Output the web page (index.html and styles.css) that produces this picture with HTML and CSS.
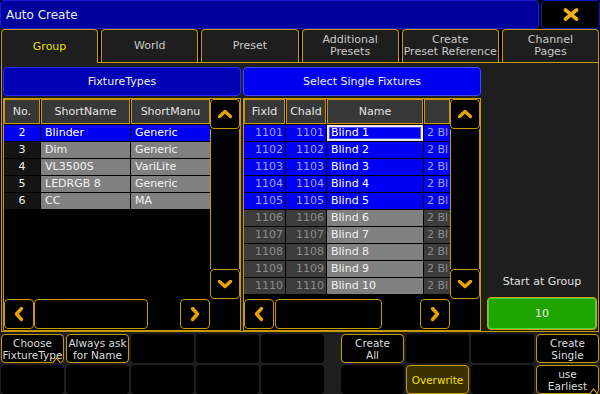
FILE: index.html
```html
<!DOCTYPE html>
<html lang="en">
<head>
    <meta charset="UTF-8">
    <title>Auto Create</title>
    <link rel="stylesheet" href="styles.css">
</head>
<body>
<div class="screen">

    <!-- Title bar -->
    <div class="titlebar">
        <div class="title">Auto Create</div>
        <div class="close">
            <svg width="16" height="13" viewBox="0 0 16 13"><path d="M2.5 2 L13.5 11 M13.5 2 L2.5 11" stroke="#f0b018" stroke-width="3.6" stroke-linecap="round" fill="none"/></svg>
        </div>
    </div>

    <!-- Tabs -->
    <div class="tabs">
        <div class="tab active">Group</div>
        <div class="tab">World</div>
        <div class="tab">Preset</div>
        <div class="tab">Additional<br>Presets</div>
        <div class="tab">Create<br>Preset Reference</div>
        <div class="tab">Channel<br>Pages</div>
    </div>

    <div class="content">

        <!-- Fixture types -->
        <div class="panel left">
            <div class="panel-head">FixtureTypes</div>
            <div class="list">
                <div class="list-main">
                    <div class="grid">
                        <div class="row head-row">
                            <div class="hcell">No.</div>
                            <div class="hcell">ShortName</div>
                            <div class="hcell">ShortManu</div>
                        </div>
                        <div class="row sel">
                            <div class="cell num">2</div>
                            <div class="cell">Blinder</div>
                            <div class="cell">Generic</div>
                        </div>
                        <div class="row">
                            <div class="cell num">3</div>
                            <div class="cell">Dim</div>
                            <div class="cell">Generic</div>
                        </div>
                        <div class="row">
                            <div class="cell num">4</div>
                            <div class="cell">VL3500S</div>
                            <div class="cell">VariLite</div>
                        </div>
                        <div class="row">
                            <div class="cell num">5</div>
                            <div class="cell">LEDRGB 8</div>
                            <div class="cell">Generic</div>
                        </div>
                        <div class="row">
                            <div class="cell num">6</div>
                            <div class="cell">CC</div>
                            <div class="cell">MA</div>
                        </div>
                    </div>
                    <div class="vscroll">
                        <div class="sbtn"><svg width="16" height="10" viewBox="0 0 16 10"><path d="M2.5 7.5 L8 2.5 L13.5 7.5" stroke="#e8a400" stroke-width="3.4" stroke-linecap="round" stroke-linejoin="round" fill="none"/></svg></div>
                        <div class="track"></div>
                        <div class="sbtn"><svg width="16" height="10" viewBox="0 0 16 10"><path d="M2.5 2.5 L8 7.5 L13.5 2.5" stroke="#e8a400" stroke-width="3.4" stroke-linecap="round" stroke-linejoin="round" fill="none"/></svg></div>
                    </div>
                </div>
                <div class="hscroll">
                    <div class="sbtn"><svg width="10" height="16" viewBox="0 0 10 16"><path d="M7.5 2.5 L2.5 8 L7.5 13.5" stroke="#e8a400" stroke-width="3.4" stroke-linecap="round" stroke-linejoin="round" fill="none"/></svg></div>
                    <div class="thumb"></div>
                    <div class="spacer"></div>
                    <div class="sbtn"><svg width="10" height="16" viewBox="0 0 10 16"><path d="M2.5 2.5 L7.5 8 L2.5 13.5" stroke="#e8a400" stroke-width="3.4" stroke-linecap="round" stroke-linejoin="round" fill="none"/></svg></div>
                    <div class="corner"></div>
                </div>
            </div>
        </div>

        <!-- Single fixtures -->
        <div class="panel right focus">
            <div class="panel-head">Select Single Fixtures</div>
            <div class="list">
                <div class="list-main">
                    <div class="grid">
                        <div class="row head-row">
                            <div class="hcell">FixId</div>
                            <div class="hcell">ChaId</div>
                            <div class="hcell">Name</div>
                            <div class="hcell"></div>
                        </div>
                        <div class="row sel">
                            <div class="cell id">1101</div>
                            <div class="cell id">1101</div>
                            <div class="cell name editing">Blind 1</div>
                            <div class="cell id-left">2 Bl</div>
                        </div>
                        <div class="row sel">
                            <div class="cell id">1102</div>
                            <div class="cell id">1102</div>
                            <div class="cell name">Blind 2</div>
                            <div class="cell id-left">2 Bl</div>
                        </div>
                        <div class="row sel">
                            <div class="cell id">1103</div>
                            <div class="cell id">1103</div>
                            <div class="cell name">Blind 3</div>
                            <div class="cell id-left">2 Bl</div>
                        </div>
                        <div class="row sel">
                            <div class="cell id">1104</div>
                            <div class="cell id">1104</div>
                            <div class="cell name">Blind 4</div>
                            <div class="cell id-left">2 Bl</div>
                        </div>
                        <div class="row sel">
                            <div class="cell id">1105</div>
                            <div class="cell id">1105</div>
                            <div class="cell name">Blind 5</div>
                            <div class="cell id-left">2 Bl</div>
                        </div>
                        <div class="row">
                            <div class="cell id">1106</div>
                            <div class="cell id">1106</div>
                            <div class="cell name">Blind 6</div>
                            <div class="cell id-left">2 Bl</div>
                        </div>
                        <div class="row">
                            <div class="cell id">1107</div>
                            <div class="cell id">1107</div>
                            <div class="cell name">Blind 7</div>
                            <div class="cell id-left">2 Bl</div>
                        </div>
                        <div class="row">
                            <div class="cell id">1108</div>
                            <div class="cell id">1108</div>
                            <div class="cell name">Blind 8</div>
                            <div class="cell id-left">2 Bl</div>
                        </div>
                        <div class="row">
                            <div class="cell id">1109</div>
                            <div class="cell id">1109</div>
                            <div class="cell name">Blind 9</div>
                            <div class="cell id-left">2 Bl</div>
                        </div>
                        <div class="row">
                            <div class="cell id">1110</div>
                            <div class="cell id">1110</div>
                            <div class="cell name">Blind 10</div>
                            <div class="cell id-left">2 Bl</div>
                        </div>
                    </div>
                    <div class="vscroll">
                        <div class="sbtn"><svg width="16" height="10" viewBox="0 0 16 10"><path d="M2.5 7.5 L8 2.5 L13.5 7.5" stroke="#e8a400" stroke-width="3.4" stroke-linecap="round" stroke-linejoin="round" fill="none"/></svg></div>
                        <div class="track"></div>
                        <div class="sbtn"><svg width="16" height="10" viewBox="0 0 16 10"><path d="M2.5 2.5 L8 7.5 L13.5 2.5" stroke="#e8a400" stroke-width="3.4" stroke-linecap="round" stroke-linejoin="round" fill="none"/></svg></div>
                    </div>
                </div>
                <div class="hscroll">
                    <div class="sbtn"><svg width="10" height="16" viewBox="0 0 10 16"><path d="M7.5 2.5 L2.5 8 L7.5 13.5" stroke="#e8a400" stroke-width="3.4" stroke-linecap="round" stroke-linejoin="round" fill="none"/></svg></div>
                    <div class="thumb narrow"></div>
                    <div class="spacer"></div>
                    <div class="sbtn"><svg width="10" height="16" viewBox="0 0 10 16"><path d="M2.5 2.5 L7.5 8 L2.5 13.5" stroke="#e8a400" stroke-width="3.4" stroke-linecap="round" stroke-linejoin="round" fill="none"/></svg></div>
                    <div class="corner"></div>
                </div>
            </div>
        </div>

        <!-- Start group -->
        <div class="side">
            <div class="side-label">Start at Group</div>
            <div class="green-btn">10</div>
        </div>
    </div>

    <!-- Bottom keys -->
    <div class="keys">
        <div class="key-group five">
            <div class="key btn">Choose<br>FixtureType
                <svg class="notch" width="9" height="6" viewBox="0 0 9 6"><path d="M0.5 6 L4.5 1 L8.5 6" stroke="#d4a000" stroke-width="1.2" fill="#000"/></svg>
            </div>
            <div class="key btn">Always ask<br>for Name</div>
            <div class="key"></div>
            <div class="key"></div>
            <div class="key"></div>
            <div class="key"></div>
            <div class="key"></div>
            <div class="key"></div>
            <div class="key"></div>
            <div class="key"></div>
        </div>
        <div class="key-group four">
            <div class="key btn">Create<br>All</div>
            <div class="key"></div>
            <div class="key"></div>
            <div class="key btn">Create<br>Single</div>
            <div class="key"></div>
            <div class="key btn on">Overwrite</div>
            <div class="key"></div>
            <div class="key btn">use<br>Earliest
                <svg class="notch end" width="9" height="6" viewBox="0 0 9 6"><path d="M0.5 6 L4.5 1 L8.5 6" stroke="#d4a000" stroke-width="1.2" fill="#000"/></svg>
            </div>
        </div>
    </div>
</div>
</body>
</html>
```

FILE: styles.css
```css
/* General */
* {
    box-sizing: border-box;
}

body {
    margin: 0;
    background-color: #000;
    font-family: "DejaVu Sans", sans-serif;
    font-size: 11px;
    color: #ddd;
}

.screen {
    width: 600px;
    height: 394px;
    overflow: hidden;
    display: flex;
    flex-direction: column;
}

/* Title bar */
.titlebar {
    display: flex;
    gap: 2px;
    height: 29px;
    flex-shrink: 0;
}

.title {
    flex: 1;
    background-color: #00009c;
    border: 1px solid #1c1cd8;
    border-radius: 4px;
    color: #f0f0f0;
    font-size: 12px;
    padding-left: 5px;
    display: flex;
    align-items: center;
}

.close {
    width: 59px;
    background-color: #000;
    border: 1px solid #1414c8;
    border-radius: 4px;
    display: flex;
    align-items: center;
    justify-content: center;
}

/* Tabs */
.tabs {
    display: flex;
    gap: 3px;
    height: 33px;
    padding: 0 1px;
    flex-shrink: 0;
}

.tab {
    flex: 1;
    background-color: #1e1e1e;
    border: 1px solid #c89a00;
    border-bottom: none;
    border-radius: 4px 4px 0 0;
    color: #c8c8c8;
    display: flex;
    align-items: center;
    justify-content: center;
    text-align: center;
    line-height: 12px;
    white-space: nowrap;
}

.tab.active {
    color: #f4ee00;
    text-shadow: 0 0 1px #000, 0 0 1px #000;
    position: relative;
    z-index: 1;
    height: 34px;
    padding-top: 1px;
}

/* Main area */
.content {
    height: 270px;
    flex-shrink: 0;
    margin: 0 1px;
    border: 1px solid #c89a00;
    background-color: #1e1e1e;
    display: flex;
    gap: 2px;
    padding: 4px 1px 0 1px;
}

.panel {
    width: 238px;
    display: flex;
    flex-direction: column;
}

.panel-head {
    height: 29px;
    background-color: #0000b4;
    border: 1px solid #2a2aff;
    border-radius: 4px;
    display: flex;
    align-items: center;
    justify-content: center;
    color: #f0f0f0;
}

.panel.focus .panel-head {
    background-color: #0000f0;
    border-color: #4646ff;
}

.list {
    margin-top: 2px;
    flex: 1;
    border: 1px solid #c89a00;
    background-color: #000;
    display: flex;
    flex-direction: column;
}

.list-main {
    display: flex;
    height: 200px;
}

.grid {
    flex: 1;
    display: flex;
    flex-direction: column;
    gap: 1px;
    overflow: hidden;
}

.row {
    display: grid;
    grid-template-columns: 36px 89px 1fr;
    gap: 1px;
    height: 16px;
    flex-shrink: 0;
}

.right .row {
    grid-template-columns: 41px 40px 96px 1fr;
}

.row.head-row {
    height: 25px;
}

.hcell {
    background-color: #383838;
    border: 1px solid #c89a00;
    color: #e4e4e4;
    display: flex;
    align-items: center;
    justify-content: center;
}

.cell {
    background-color: #808080;
    color: #f2f2f2;
    padding-left: 4px;
    line-height: 16px;
    white-space: nowrap;
    overflow: hidden;
}

.cell.num {
    background-color: #141414;
    text-align: center;
    padding-left: 0;
}

.cell.id {
    background-color: #3c3c3c;
    color: #8c8c8c;
    text-align: right;
    padding: 0 2px 0 0;
}

.cell.id-left {
    background-color: #3c3c3c;
    color: #8c8c8c;
    padding-left: 3px;
}

.row.sel .cell {
    background-color: #0000f4;
    color: #fff;
}

.row.sel .cell.id,
.row.sel .cell.id-left {
    color: #a4a4e4;
}

.cell.editing {
    box-shadow: inset 0 0 0 2px #ececec, inset 0 0 0 3px #5050ff;
}

/* Scroll bars */
.vscroll {
    width: 30px;
    display: flex;
    flex-direction: column;
}

.sbtn {
    height: 30px;
    width: 30px;
    flex-shrink: 0;
    border: 1px solid #c89a00;
    border-radius: 4px;
    background-color: #000;
    display: flex;
    align-items: center;
    justify-content: center;
}

.track {
    flex: 1;
    border-left: 1px solid #c89a00;
    border-right: 1px solid #c89a00;
}

.hscroll {
    height: 30px;
    display: flex;
}

.thumb {
    width: 114px;
    border: 1px solid #c89a00;
    border-radius: 4px;
}

.thumb.narrow {
    width: 107px;
    margin-left: 1px;
}

.spacer {
    flex: 1;
}

.corner {
    width: 30px;
}

/* Start at group */
.side {
    flex: 1;
    display: flex;
    flex-direction: column;
    justify-content: flex-end;
    padding: 0 0 1px 4px;
}

.side-label {
    text-align: center;
    color: #e0e0e0;
    margin-bottom: 9px;
}

.green-btn {
    height: 33px;
    background-color: #20a400;
    border: 1px solid #e0a000;
    border-radius: 4px;
    box-shadow: inset 0 0 0 1px #3ed83e;
    color: #f0f0f0;
    display: flex;
    align-items: center;
    justify-content: center;
}

/* Bottom keys */
.keys {
    height: 62px;
    flex-shrink: 0;
    display: flex;
    justify-content: space-between;
    padding: 2px 1px 0 1px;
    background-color: #1e1e1e;
}

.key-group {
    display: grid;
    grid-template-rows: 29px 29px;
    gap: 2px;
}

.key-group.five {
    grid-template-columns: repeat(5, 63px);
}

.key-group.four {
    grid-template-columns: repeat(4, 63px);
}

.key {
    background-color: #000;
    border-radius: 4px;
    position: relative;
}

.key.btn {
    border: 1px solid #c89a00;
    color: #dcdcdc;
    font-size: 10.5px;
    line-height: 12px;
    text-align: center;
    display: flex;
    align-items: center;
    justify-content: center;
    white-space: nowrap;
}

.key.on {
    background-color: #3a3000;
    color: #f0e400;
}

.notch {
    position: absolute;
    bottom: -1px;
    right: 2px;
}

.notch.end {
    right: 0;
}
```
